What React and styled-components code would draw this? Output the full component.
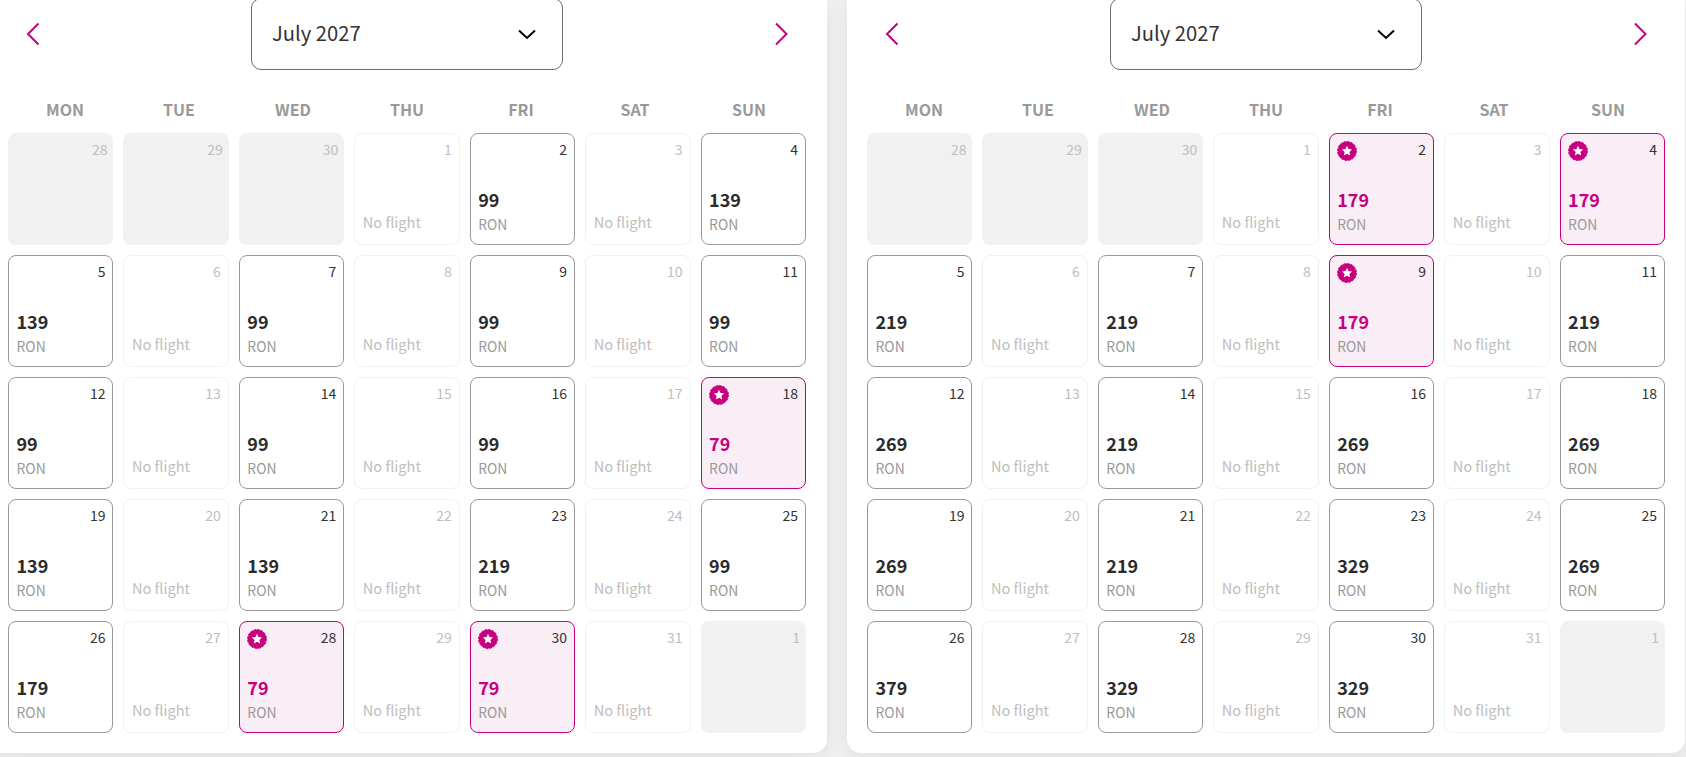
import React, {useState} from "react";
import styled, {createGlobalStyle} from "styled-components";

const GlobalStyle = createGlobalStyle`
  * {
    box-sizing: border-box;
  }

  body {
    margin: 0;
    overflow: hidden;
    background: #f1f1f1;
    font-family: "Noto Sans CJK SC", "Noto Sans", sans-serif;
    color: #333;
  }

  button {
    margin: 0;
    padding: 0;
    border: 0;
    background: none;
    font: inherit;
    color: inherit;
    cursor: pointer;
  }
`;

const Page = styled.main`
  display: flex;
  gap: 20px;
  width: 1697px;
  height: 757px;
  margin-left: -12px;
`;

const Card = styled.section`
  flex: none;
  width: ${props => props.$width}px;
  height: 753px;
  padding: 0 20px;
  background: #fff;
  border-radius: 0 0 14px 14px;
  box-shadow: 0 5px 20px rgba(0, 0, 0, 0.08);
`;

const CardContent = styled.div`
  width: 798px;
`;

const Header = styled.header`
  display: flex;
  align-items: center;
  justify-content: space-between;
  height: 72px;
  margin-top: -2px;
  padding: 0 16px;
`;

const ArrowButton = styled.button`
  display: flex;
  color: #c6007e;
`;

const MonthSelect = styled.button`
  display: flex;
  align-items: center;
  justify-content: space-between;
  width: 312px;
  height: 72px;
  padding: 0 26px 0 20px;
  border: 1px solid #6e6e6e;
  border-radius: 10px;
  font-size: 20.2px;
  line-height: 30px;
`;

const MonthLabel = styled.span`
  padding-bottom: 2px;
`;

const Weekdays = styled.div`
  display: grid;
  grid-template-columns: repeat(7, 1fr);
  margin: 27px 0 12px;
  text-align: center;
  font-size: 16px;
  line-height: 24px;
  font-weight: 700;
  color: #999;
`;

const Days = styled.div`
  display: grid;
  grid-template-columns: repeat(7, 1fr);
  grid-auto-rows: 112px;
  gap: 10px;
`;

const borders = {outside: "transparent", empty: "#f1f1f1", fare: "#999", best: "#c6007e"};
const fills = {outside: "#f1f1f1", empty: "#fff", fare: "#fff", best: "#f9eef6"};

const Day = styled.div`
  display: flex;
  flex-direction: column;
  justify-content: space-between;
  padding: ${props => props.$kind === "outside" ? "8px 6px 8px 8px" : "7px 7px 9px"};
  border: ${props => props.$kind === "outside" ? 0 : 1}px solid ${props => borders[props.$kind]};
  border-radius: 8px;
  background: ${props => fills[props.$kind]};
`;

const DayTop = styled.div`
  display: flex;
  align-items: flex-start;
  justify-content: space-between;
  height: 20px;
`;

const DayNumber = styled.span`
  margin-left: auto;
  font-size: 14px;
  line-height: 16px;
  color: ${props => props.$muted ? "#bebebe" : "#333"};
`;

const Fare = styled.div`
  display: flex;
  flex-direction: column;
  padding-left: 0.5px;
`;

const Price = styled.strong`
  margin-bottom: 1px;
  font-size: 18px;
  line-height: 26px;
  font-weight: 700;
  color: ${props => props.$best ? "#c6007e" : "#2b2b2b"};
`;

const Currency = styled.span`
  font-size: 13.9px;
  line-height: 22px;
  color: #999;
`;

const NoFlight = styled.span`
  padding-left: 0.5px;
  font-size: 14.6px;
  line-height: 27px;
  color: #bebebe;
`;

const BestFareIcon = () => (
    <svg width="20" height="20" viewBox="0 0 20 20">
        <circle cx="10" cy="10" r="9.4" fill="#c6007e"/>
        <circle cx="10" cy="10" r="9.5" fill="none" stroke="#c6007e" strokeDasharray="2.3 1.43"/>
        <path d="M10 4.8l1.5 3.3 3.6.4-2.7 2.4.8 3.6-3.2-1.8-3.2 1.8.8-3.6-2.7-2.4 3.6-.4z" fill="#fff"/>
    </svg>
);

const Arrow = ({next}) => (
    <svg width="16" height="24" viewBox="0 0 16 24" fill="none" stroke="currentColor" strokeWidth="2">
        <path d={next ? "M2 1.5L12.5 12 2 22.5" : "M14.5 1.5L4 12l10.5 10.5"}/>
    </svg>
);

const Chevron = () => (
    <svg width="18" height="11" viewBox="0 0 18 11" fill="none" stroke="#000" strokeWidth="2">
        <path d="M1 1.5l8 7.5 8-7.5"/>
    </svg>
);

const weekdays = ["MON", "TUE", "WED", "THU", "FRI", "SAT", "SUN"];

const outbound = {
    2: 99, 4: 139, 5: 139, 7: 99, 9: 99, 11: 99, 12: 99, 14: 99, 16: 99, 18: 79,
    19: 139, 21: 139, 23: 219, 25: 99, 26: 179, 28: 79, 30: 79
};

const inbound = {
    2: 179, 4: 179, 5: 219, 7: 219, 9: 179, 11: 219, 12: 269, 14: 219, 16: 269, 18: 269,
    19: 269, 21: 219, 23: 329, 25: 269, 26: 379, 28: 329, 30: 329
};

const calendarDays = Array.from({length: 35}, (_, i) => {
    if (i < 3) return {number: 28 + i, outside: true};
    if (i > 33) return {number: i - 33, outside: true};
    return {number: i - 2, outside: false};
});

const DayCell = ({number, outside, price, best}) => {
    const kind = outside ? "outside" : !price ? "empty" : best ? "best" : "fare";

    return (
        <Day $kind={kind}>
            <DayTop>
                {best && <BestFareIcon/>}
                <DayNumber $muted={!price}>{number}</DayNumber>
            </DayTop>
            {price && (
                <Fare>
                    <Price $best={best}>{price}</Price>
                    <Currency>RON</Currency>
                </Fare>
            )}
            {kind === "empty" && <NoFlight>No flight</NoFlight>}
        </Day>
    );
};

const FareCalendar = ({fares, width}) => {
    const [month] = useState("July 2027");
    const lowest = Math.min(...Object.values(fares));

    return (
        <Card $width={width}>
            <CardContent>
                <Header>
                    <ArrowButton aria-label="Previous month"><Arrow/></ArrowButton>
                    <MonthSelect><MonthLabel>{month}</MonthLabel><Chevron/></MonthSelect>
                    <ArrowButton aria-label="Next month"><Arrow next/></ArrowButton>
                </Header>
                <Weekdays>
                    {weekdays.map(day => <span key={day}>{day}</span>)}
                </Weekdays>
                <Days>
                    {calendarDays.map(({number, outside}, i) => {
                        const price = outside ? undefined : fares[number];
                        return (
                            <DayCell
                                key={i}
                                number={number}
                                outside={outside}
                                price={price}
                                best={price === lowest}
                            />
                        );
                    })}
                </Days>
            </CardContent>
        </Card>
    );
};

const App = () => (
    <>
        <GlobalStyle/>
        <Page>
            <FareCalendar fares={outbound} width={839}/>
            <FareCalendar fares={inbound} width={838}/>
        </Page>
    </>
);

export default App;
